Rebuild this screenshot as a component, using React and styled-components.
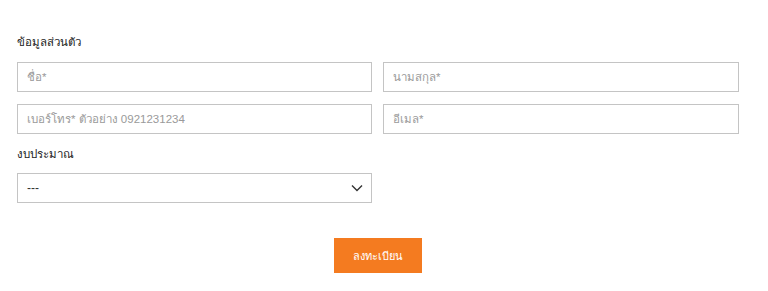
import React from "react";
import styled, { createGlobalStyle } from "styled-components";

const Global = createGlobalStyle`
  html, body { margin: 0; padding: 0; background: #fff; }
  body { font-family: "Liberation Sans", "Noto Sans", sans-serif; }
  * { box-sizing: border-box; }
`;

const Form = styled.form`
  width: 722px;
  margin-left: 17px;
  padding-top: 34px;
  display: flex;
  flex-direction: column;
`;

const Heading = styled.div`
  font-size: 11.5px;
  line-height: 16px;
  color: #222;
  margin-bottom: 12px;
`;

const Grid = styled.div`
  display: grid;
  grid-template-columns: 355px 356px;
  column-gap: 11px;
  row-gap: 12px;
`;

const Field = styled.input`
  height: 30px;
  width: 100%;
  border: 1px solid #c4c4c4;
  padding: 0 9px;
  font-family: inherit;
  font-size: 11.5px;
  color: #555;
  outline: none;
  &::placeholder { color: #9a9a9a; }
`;

const Label = styled.div`
  font-size: 11.5px;
  line-height: 16px;
  color: #222;
  margin-top: 12px;
  margin-bottom: 11px;
`;

const SelectBox = styled.div`
  width: 355px;
  height: 30px;
  border: 1px solid #c4c4c4;
  display: flex;
  align-items: center;
  justify-content: space-between;
  padding: 0 8px 0 9px;
  font-size: 12px;
  color: #333;
`;

const ButtonRow = styled.div`
  display: flex;
  justify-content: center;
  margin-top: 35px;
`;

const Submit = styled.button`
  width: 88px;
  height: 35px;
  border: none;
  background: #f47b20;
  color: #fff;
  font-family: inherit;
  font-size: 11px;
  cursor: pointer;
`;

export default function App() {
  return (
    <>
      <Global />
      <Form onSubmit={(e) => e.preventDefault()}>
        <Heading>ข้อมูลส่วนตัว</Heading>
        <Grid>
          <Field placeholder="ชื่อ*" />
          <Field placeholder="นามสกุล*" />
          <Field placeholder="เบอร์โทร* ตัวอย่าง 0921231234" />
          <Field placeholder="อีเมล*" />
        </Grid>
        <Label>งบประมาณ</Label>
        <SelectBox>
          <span>---</span>
          <svg width="12" height="8" viewBox="0 0 12 8" fill="none">
            <path d="M1 1.5 L6 6.5 L11 1.5" stroke="#333" strokeWidth="1.4" />
          </svg>
        </SelectBox>
        <ButtonRow>
          <Submit type="submit">ลงทะเบียน</Submit>
        </ButtonRow>
      </Form>
    </>
  );
}
